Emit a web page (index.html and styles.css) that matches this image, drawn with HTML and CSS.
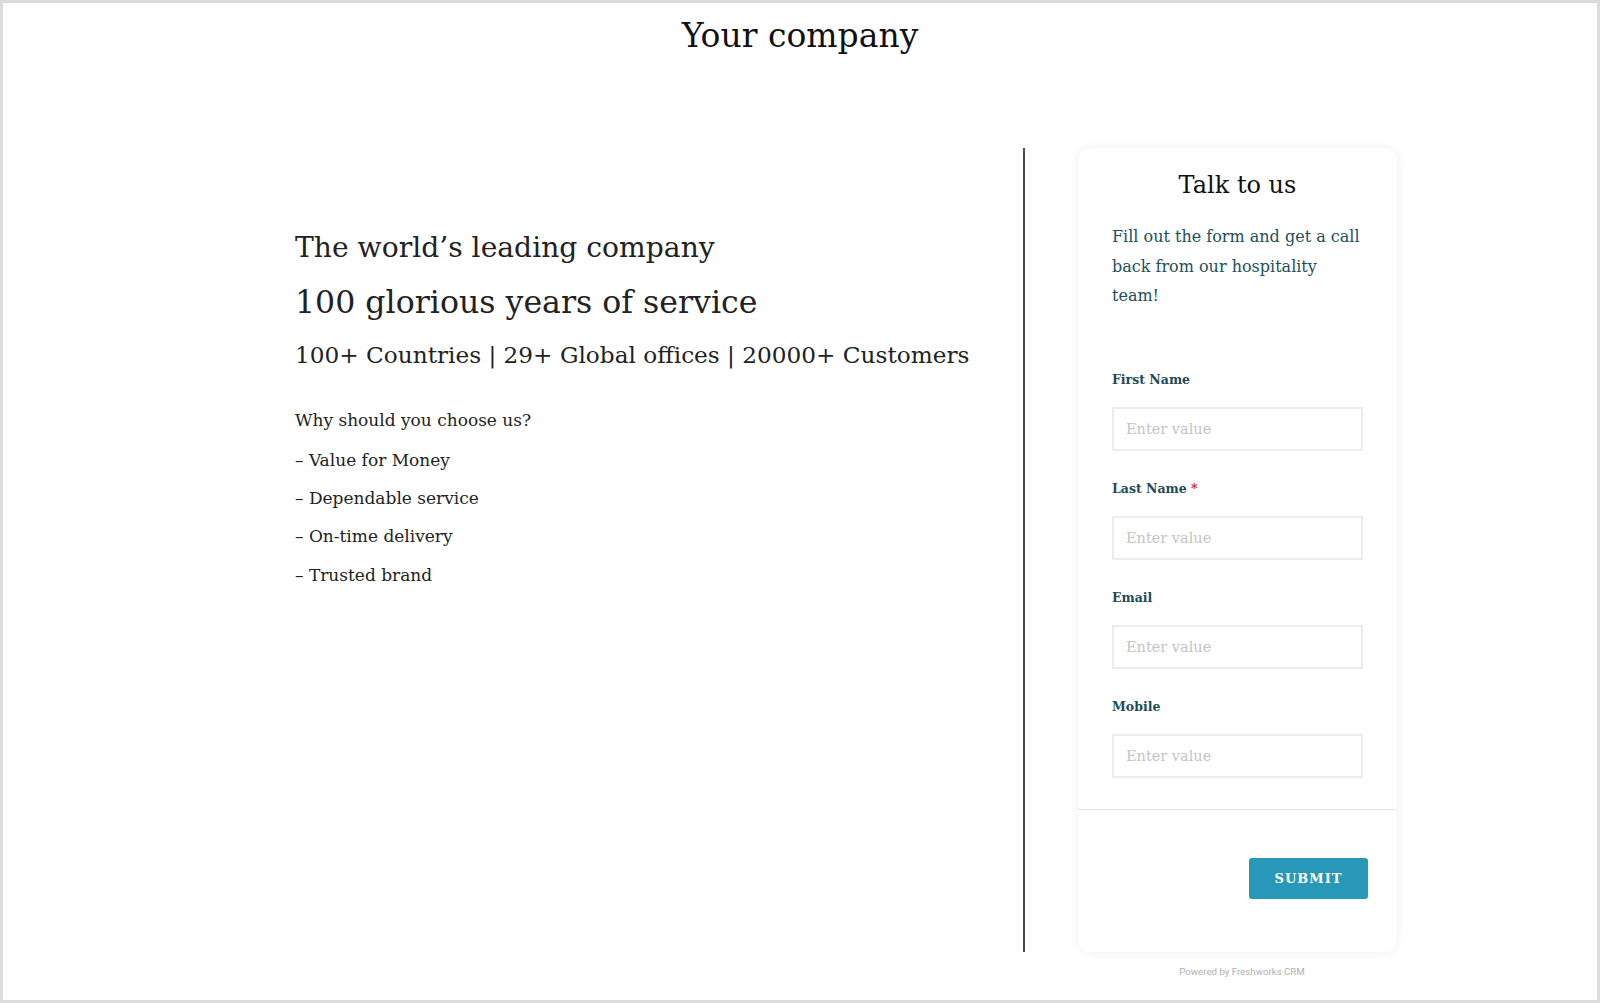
FILE: index.html
```html
<!DOCTYPE html>
<html lang="en">
<head>
<meta charset="utf-8">
<title>Your company</title>
<link rel="stylesheet" href="styles.css">
</head>
<body>
<div class="window">
  <header class="site-header">
    <h1 class="brand">Your company</h1>
  </header>
  <main class="main">
    <section class="intro">
      <h2 class="intro-title">The world’s leading company</h2>
      <h3 class="intro-sub">100 glorious years of service</h3>
      <p class="intro-stats">100+ Countries | 29+ Global offices | 20000+ Customers</p>
      <p class="intro-q">Why should you choose us?</p>
      <ul class="intro-list">
        <li>– Value for Money</li>
        <li>– Dependable service</li>
        <li>– On-time delivery</li>
        <li>– Trusted brand</li>
      </ul>
    </section>
    <aside class="form-wrap">
      <form class="card">
        <div class="card-body">
          <h2 class="card-title">Talk to us</h2>
          <p class="card-desc">Fill out the form and get a call back from our hospitality team!</p>
          <div class="field">
            <label class="field-label">First Name</label>
            <input class="field-input" type="text" placeholder="Enter value">
          </div>
          <div class="field">
            <label class="field-label">Last Name <span class="req">*</span></label>
            <input class="field-input" type="text" placeholder="Enter value">
          </div>
          <div class="field">
            <label class="field-label">Email</label>
            <input class="field-input" type="text" placeholder="Enter value">
          </div>
          <div class="field">
            <label class="field-label">Mobile</label>
            <input class="field-input" type="text" placeholder="Enter value">
          </div>
        </div>
        <div class="card-footer">
          <button class="submit" type="button">SUBMIT</button>
        </div>
      </form>
      <p class="powered">Powered by Freshworks CRM</p>
    </aside>
  </main>
</div>
</body>
</html>
```

FILE: styles.css
```css
* { box-sizing: border-box; }

html, body {
  margin: 0;
  padding: 0;
  height: 100%;
}

body {
  background: #dcdcdc;
  padding: 3px;
  font-family: "DejaVu Serif", "Liberation Serif", serif;
  color: #222;
}

.window {
  background: #ffffff;
  height: 997px;
  overflow: hidden;
}

.site-header {
  padding-top: 13px;
  text-align: center;
}

.brand {
  margin: 0;
  font-size: 33px;
  font-weight: normal;
  line-height: 1.2;
  color: #111;
}

.main {
  display: flex;
  align-items: stretch;
  margin-top: 92px;
  padding-left: 292px;
}

.intro {
  width: 730px;
  border-right: 2px solid #4a4a4a;
  padding-top: 83px;
}

.intro-title {
  margin: 0;
  font-size: 28.2px;
  font-weight: normal;
  line-height: 1.2;
}

.intro-sub {
  margin: 20px 0 0;
  font-size: 31.6px;
  font-weight: normal;
  line-height: 1.2;
}

.intro-stats {
  margin: 19px 0 0;
  font-size: 23.2px;
  line-height: 1.2;
}

.intro-q {
  margin: 41px 0 0;
  font-size: 17px;
  line-height: 1.2;
}

.intro-list {
  list-style: none;
  margin: 19px 0 0;
  padding: 0;
  font-size: 17px;
  line-height: 1.2;
}

.intro-list li {
  margin-bottom: 18px;
}

.form-wrap {
  margin-left: 53px;
  width: 319px;
}

.card {
  background: #fff;
  border-radius: 12px;
  box-shadow: 0 0 10px rgba(0, 0, 0, 0.07);
}

.card-body {
  padding: 23px 34px 0;
  border-bottom: 1px solid #e2e2e2;
}

.card-title {
  margin: 0;
  text-align: center;
  font-size: 24px;
  font-weight: normal;
  line-height: 1.2;
  color: #111;
}

.card-desc {
  margin: 23px 0 0;
  font-size: 16px;
  line-height: 29.5px;
  color: #1c4f5c;
}

.field {
  margin-top: 30px;
}

.card-desc + .field {
  margin-top: 61px;
}

.field:last-child {
  margin-bottom: 31px;
}

.field-label {
  display: block;
  font-size: 12.5px;
  font-weight: bold;
  line-height: 15px;
  color: #1c4b57;
}

.req {
  color: #e02020;
}

.field-input {
  display: block;
  width: 100%;
  height: 44px;
  margin-top: 20px;
  padding: 0 12px;
  border: 2px solid #ececec;
  border-radius: 0;
  font-family: "DejaVu Serif", "Liberation Serif", serif;
  font-size: 14.5px;
  color: #333;
  outline: none;
}

.field-input::placeholder {
  color: #c4c4c4;
}

.card-footer {
  display: flex;
  justify-content: flex-end;
  padding: 48px 29px 53px;
}

.submit {
  width: 119px;
  height: 41px;
  border: none;
  border-radius: 3px;
  background: #2898b8;
  color: #fff;
  font-family: "DejaVu Serif", "Liberation Serif", serif;
  font-size: 13px;
  font-weight: bold;
  letter-spacing: 1px;
}

.powered {
  height: 0;
  margin: 14px 0 -14px;
  padding-left: 9px;
  text-align: center;
  font-family: Roboto, "Liberation Sans", sans-serif;
  font-size: 9.7px;
  line-height: 12px;
  color: #b0b0b0;
}
```
